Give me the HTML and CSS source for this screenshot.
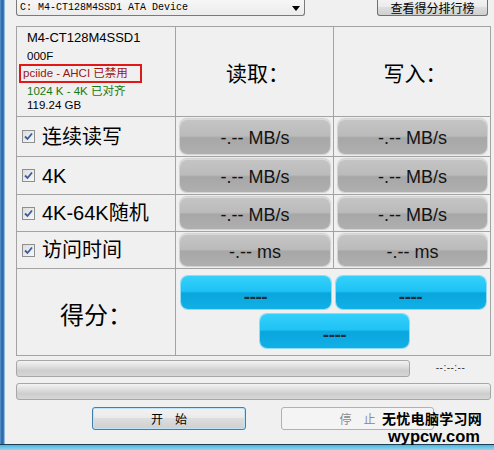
FILE: index.html
```html
<!DOCTYPE html>
<html lang="zh-CN">
<head>
<meta charset="utf-8">
<title>AS SSD Benchmark</title>
<link rel="stylesheet" href="styles.css">
</head>
<body>
<div class="screen">
  <div class="main-area">
    <div class="frame-left"></div>
    <div class="app">
      <div class="topbar">
        <div class="combo">
          <span class="combo-text">C: M4-CT128M4SSD1 ATA Device</span>
          <svg class="combo-arrow" width="8" height="5" viewBox="0 0 8 5"><path d="M0 0H8L4 5Z" fill="#000"/></svg>
        </div>
        <div class="btn rank">查看得分排行榜</div>
      </div>

      <div class="grid">
        <div class="cell info">
          <div class="model">M4-CT128M4SSD1</div>
          <div class="line">000F</div>
          <div class="line red-box">pciide - AHCI 已禁用</div>
          <div class="line green">1024 K - 4K 已对齐</div>
          <div class="line">119.24 GB</div>
        </div>
        <div class="cell head">读取：</div>
        <div class="cell head">写入：</div>

        <div class="cell label"><span class="chk"><svg width="9" height="9" viewBox="0 0 9 9"><path d="M1 4.5L3.5 7L8 1.5" fill="none" stroke="#3d5a9c" stroke-width="1.8"/></svg></span><span>连续读写</span></div>
        <div class="cell val"><div class="pill">-.-- MB/s</div></div>
        <div class="cell val"><div class="pill">-.-- MB/s</div></div>

        <div class="cell label"><span class="chk"><svg width="9" height="9" viewBox="0 0 9 9"><path d="M1 4.5L3.5 7L8 1.5" fill="none" stroke="#3d5a9c" stroke-width="1.8"/></svg></span><span>4K</span></div>
        <div class="cell val"><div class="pill">-.-- MB/s</div></div>
        <div class="cell val"><div class="pill">-.-- MB/s</div></div>

        <div class="cell label"><span class="chk"><svg width="9" height="9" viewBox="0 0 9 9"><path d="M1 4.5L3.5 7L8 1.5" fill="none" stroke="#3d5a9c" stroke-width="1.8"/></svg></span><span>4K-64K随机</span></div>
        <div class="cell val"><div class="pill">-.-- MB/s</div></div>
        <div class="cell val"><div class="pill">-.-- MB/s</div></div>

        <div class="cell label"><span class="chk"><svg width="9" height="9" viewBox="0 0 9 9"><path d="M1 4.5L3.5 7L8 1.5" fill="none" stroke="#3d5a9c" stroke-width="1.8"/></svg></span><span>访问时间</span></div>
        <div class="cell val"><div class="pill">-.-- ms</div></div>
        <div class="cell val"><div class="pill">-.-- ms</div></div>

        <div class="cell score-label">得分：</div>
        <div class="cell score">
          <div class="score-row"><div class="blue">----</div><div class="blue">----</div></div>
          <div class="score-row"><div class="blue">----</div></div>
        </div>
      </div>

      <div class="prog-row"><div class="bar short"></div><span class="time">--:--:--</span></div>
      <div class="bar long"></div>

      <div class="actions">
        <div class="btn start">开　始</div>
        <div class="btn stop">停　止</div>
      </div>
    </div>
  </div>
  <div class="frame-bottom"></div>
  <div class="watermark">
    <div class="wm-cn">无忧电脑学习网</div>
    <div class="wm-en"><span class="wm-faint">XU</span>wypcw.com</div>
  </div>
</div>
</body>
</html>
```

FILE: styles.css
```css
* { box-sizing: border-box; }
html, body { margin: 0; padding: 0; }
body {
  background: #f0f0f0;
  font-family: "Liberation Sans", "Noto Sans CJK SC", sans-serif;
  color: #000;
}
.screen {
  position: relative;
  width: 494px;
  height: 450px;
  overflow: hidden;
  display: flex;
  flex-direction: column;
  background: #f0f0f0;
}
.main-area {
  display: flex;
  height: 444px;
}
.frame-left {
  width: 5px;
  flex: none;
  background: linear-gradient(to right, #5f9ad6, #2a5f9a 40%, #3d7cc0 70%, #b9d3ec);
}
.app {
  flex: 1;
  padding: 0 3px 0 11px;
  display: flex;
  flex-direction: column;
}
.topbar {
  height: 16px;
  display: flex;
  justify-content: space-between;
  margin-bottom: 10px;
}
.combo {
  width: 289px;
  height: 16px;
  border: 1px solid #7a7a7a;
  border-top: none;
  border-radius: 0 0 3px 3px;
  background: linear-gradient(#f6f6f6, #ececec);
  display: flex;
  align-items: center;
  justify-content: space-between;
  padding: 0 4px 0 3px;
}
.combo-text {
  font-family: "Liberation Mono", monospace;
  font-size: 10px;
  line-height: 12px;
  color: #000;
}
.combo-arrow { margin-top: 1px; }
.btn {
  border: 1px solid #707070;
  border-radius: 3px;
  background: linear-gradient(#f2f2f2, #ebebeb 45%, #dddddd 50%, #cfcfcf);
  font-family: "Noto Sans CJK SC", sans-serif;
  font-size: 12px;
  display: flex;
  align-items: center;
  justify-content: center;
}
.rank {
  width: 111px;
  height: 16px;
  margin-right: 3px;
  border-top: none;
  border-radius: 0 0 3px 3px;
  line-height: 14px;
}
.grid {
  display: grid;
  grid-template-columns: 158px 157px 156px;
  grid-template-rows: 89px 39px 37px 36px 36px 86px;
  gap: 1px;
  padding: 1px;
  background: #a3a3a3;
  width: 475px;
}
.cell {
  background: #f0f0f0;
}
.info {
  padding: 3px 0 0 10px;
  display: flex;
  flex-direction: column;
  align-items: flex-start;
}
.model {
  font-size: 13px;
  line-height: 16px;
  margin-bottom: 3px;
}
.line {
  font-size: 11.5px;
  line-height: 14px;
}
.red-box {
  border: 2px solid #e01818;
  margin-left: -8px;
  padding-left: 2px;
  width: 123px;
  line-height: 15px;
  color: #9a1414;
  margin-top: 1px;
  margin-bottom: 1px;
  white-space: nowrap;
}
.green { color: #137a13; }
.head {
  display: flex;
  align-items: center;
  justify-content: center;
  font-family: "Noto Sans CJK SC", sans-serif;
  font-size: 21px;
  line-height: 24px;
  padding-left: 6px;
}
.label {
  display: flex;
  align-items: center;
  padding-left: 5px;
  font-size: 20px;
  line-height: 24px;
  gap: 7px;
}
.chk {
  width: 13px;
  height: 13px;
  border: 1px solid #8e8f8f;
  background: linear-gradient(135deg, #dcdcdc, #f8f8f8);
  display: flex;
  align-items: center;
  justify-content: center;
  flex: none;
}
.val {
  padding: 2px 3px 2px 4px;
}
.pill {
  height: 100%;
  border-radius: 7px;
  background: linear-gradient(#c5c5c5, #bbbbbb 48%, #a7a7a7 54%, #afafaf);
  box-shadow: inset 0 1px 0 rgba(255,255,255,0.35), 0 0 1px 1px #d0d0d0;
  display: flex;
  align-items: center;
  justify-content: center;
  font-size: 18px;
  color: #141414;
  padding-top: 4px;
}
.score-label {
  display: flex;
  align-items: center;
  justify-content: center;
  font-family: "Noto Sans CJK SC", sans-serif;
  font-size: 24px;
  line-height: 28px;
  padding-top: 4px;
}
.score {
  grid-column: 2 / 4;
  display: flex;
  flex-direction: column;
  align-items: center;
  padding-top: 7px;
  gap: 5px;
}
.score-row {
  display: flex;
  gap: 5px;
  justify-content: center;
}
.blue {
  width: 150px;
  height: 33px;
  border-radius: 7px;
  background: linear-gradient(#34d0fb, #1fc3f5 46%, #0aa6de 52%, #10b0e6);
  box-shadow: 0 0 0 1px #93daf3;
  display: flex;
  align-items: center;
  justify-content: center;
  font-weight: bold;
  font-size: 19px;
  color: #1c2d3c;
  padding-top: 8px;
  letter-spacing: -0.5px;
}
.score-row + .score-row .blue {
  width: 149px;
  height: 34px;
  margin-left: 3px;
}
.prog-row {
  margin-top: 4px;
  height: 17px;
  display: flex;
  align-items: center;
}
.bar {
  height: 17px;
  border: 1px solid #a7a7a7;
  border-radius: 3px;
  background: linear-gradient(#f3f3f3, #e0e0e0 35%, #cdcdcd 65%, #d7d7d7);
}
.bar.short { width: 394px; }
.time {
  flex: 1;
  text-align: center;
  font-size: 10px;
  color: #333;
  letter-spacing: 0.5px;
  padding-bottom: 2px;
}
.bar.long {
  margin-top: 6px;
  width: 475px;
}
.actions {
  margin-top: 7px;
  display: flex;
  padding-left: 76px;
  gap: 35px;
}
.start {
  width: 154px;
  height: 23px;
  border-color: #3c7fb1;
  box-shadow: inset 0 0 0 1px #bfe4f7;
}
.stop {
  width: 153px;
  height: 23px;
  border-color: #adb2b5;
  background: #f4f4f4;
  color: #8a8a8a;
}
.frame-bottom {
  height: 6px;
  border-top: 1px solid #1d3d57;
  background: linear-gradient(#4bb7dc, #8fd6ef);
}
.watermark {
  position: absolute;
  left: 382px;
  top: 409px;
  font-weight: bold;
  color: #000;
}
.wm-cn {
  font-family: "Noto Sans CJK SC", sans-serif;
  font-size: 14px;
  line-height: 19px;
  letter-spacing: 0.3px;
  font-weight: bold;
}
.wm-en {
  position: relative;
  font-family: "Liberation Sans", sans-serif;
  font-size: 16.5px;
  line-height: 17px;
  padding-left: 6px;
}
.wm-faint {
  position: absolute;
  left: -12px;
  top: 6px;
  color: #9ccbe6;
  font-size: 15px;
  z-index: -1;
}
```
